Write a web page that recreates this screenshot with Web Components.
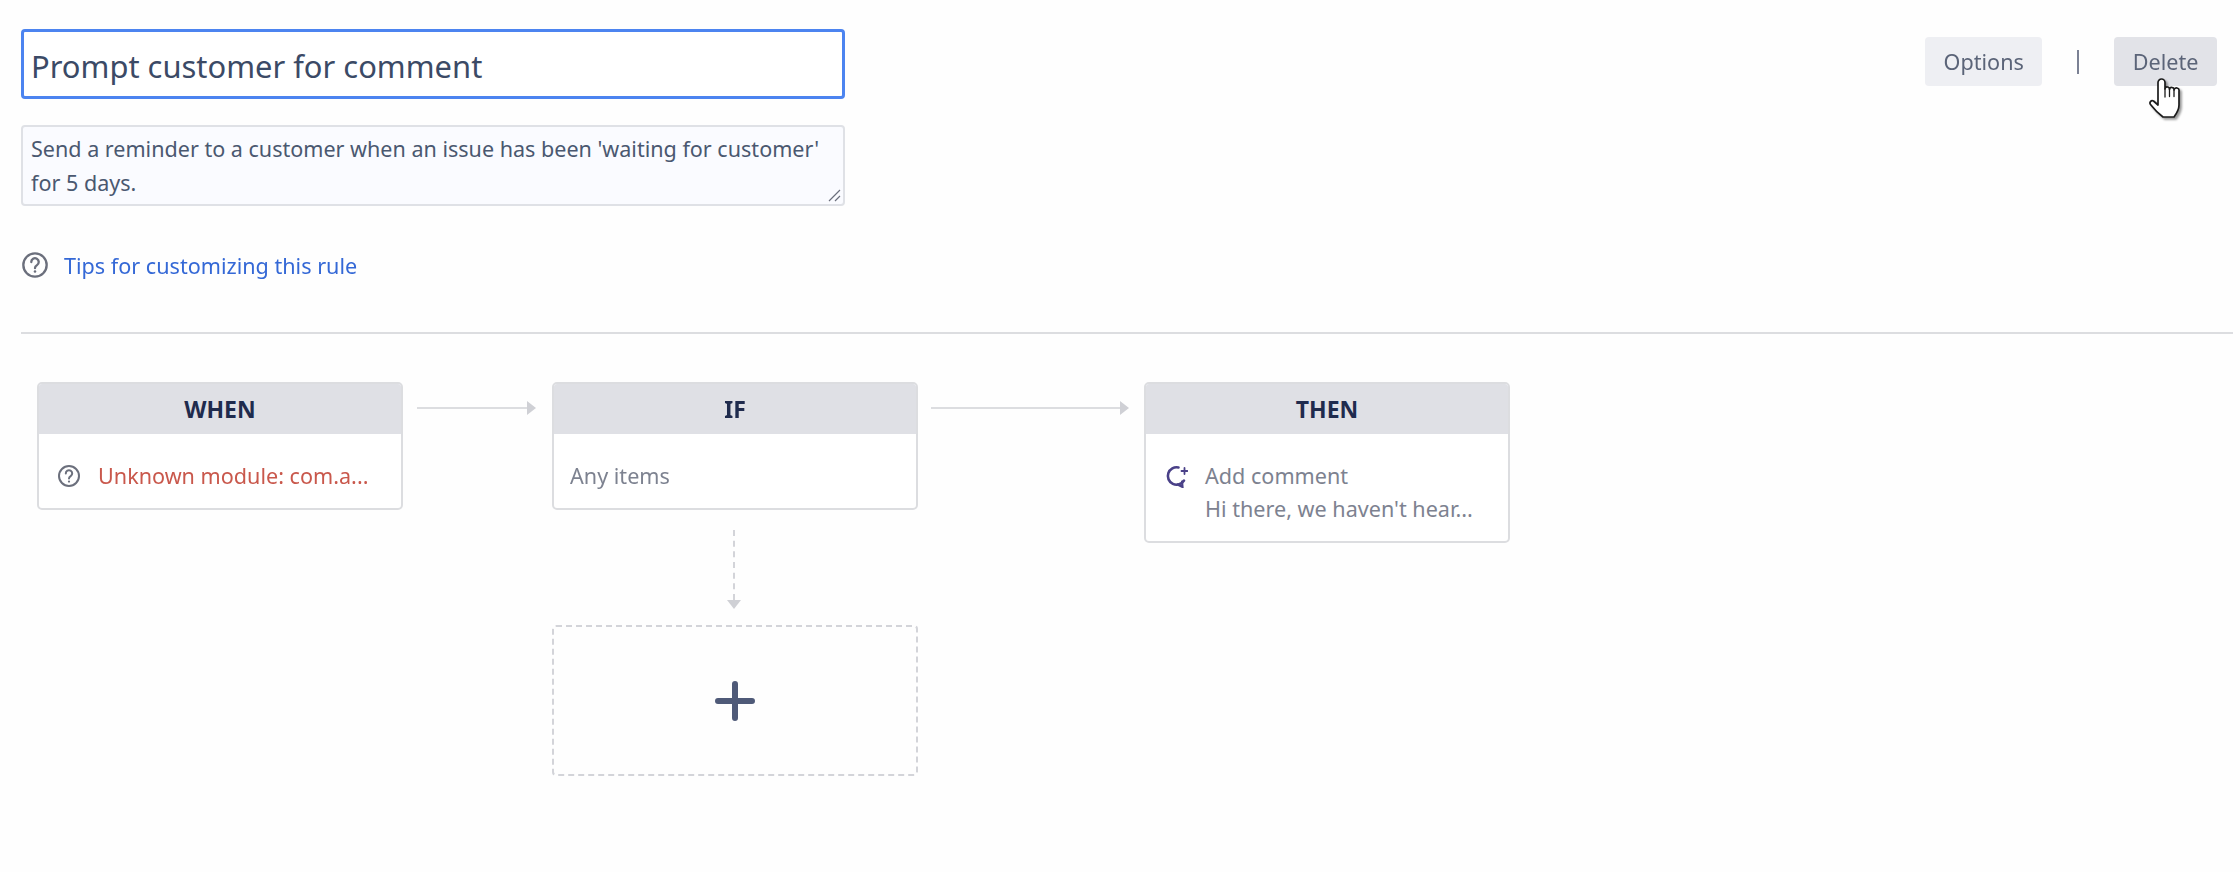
<!DOCTYPE html>
<html lang="en">
<head>
<meta charset="utf-8">
<title>Prompt customer for comment</title>
<style>
  html, body { margin: 0; background: #fefefe; }
  body { font-family: "Noto Sans", "Open Sans", sans-serif; color: #42526e; }
</style>
</head>
<body>

<rule-page>
  <rule-header>
    <title-field>Prompt customer for comment</title-field>
    <desc-field>Send a reminder to a customer when an issue has been 'waiting for customer' for 5 days.</desc-field>
    <tips-link>Tips for customizing this rule</tips-link>
    <action-button slot="actions">Options</action-button>
    <action-sep slot="actions"></action-sep>
    <action-button slot="actions" hovered>Delete</action-button>
  </rule-header>
  <rule-flow>
    <rule-card slot="when" heading="WHEN" icon="help">
      <span style="color:#c9584c">Unknown module: com.a...</span>
    </rule-card>
    <rule-card slot="if" heading="IF">
      <span>Any items</span>
    </rule-card>
    <rule-card slot="then" heading="THEN" icon="comment">
      <span>Add comment</span>
      <span>Hi there, we haven't hear...</span>
    </rule-card>
  </rule-flow>
</rule-page>

<script>
  // Icono de ayuda, se usa en el enlace y en la tarjeta WHEN
  const helpIcon = (size) => `
    <svg width="${size}" height="${size}" viewBox="0 0 24 24" fill="none" stroke="#6b6f7c" stroke-width="2" stroke-linecap="round">
      <circle cx="12" cy="12" r="10"/>
      <path d="M8.8 9.4a3.2 3.2 0 1 1 4.9 2.7c-1 .7-1.7 1.2-1.7 2.500"/>
      <circle cx="12" cy="17.600" r="1.100" fill="#6b6f7c" stroke="none"/>
    </svg>`;

  const commentIcon = `
    <svg width="24" height="24" viewBox="0 0 24 24" fill="none" stroke="#4a4188" stroke-width="2.600" stroke-linecap="round">
      <path d="M14.500 3.500A8.700 8.700 0 1 0 20 16.500"/>
      <path d="M13.500 20.500l5 2.500-.5-5.500" stroke-width="2.200"/>
      <path d="M20.500 4v6M17.500 7h6" stroke-width="1.800"/>
    </svg>`;

  class RulePage extends HTMLElement {
    constructor() {
      super();
      this.attachShadow({ mode: 'open' });
      this.shadowRoot.innerHTML = `
        <style>
          :host { display: block; height: 872px; box-sizing: border-box; padding: 29px 7px 0 21px; overflow: hidden; filter: blur(.4px); }
        </style>
        <slot></slot>
      `;
    }
  }

  class RuleHeader extends HTMLElement {
    constructor() {
      super();
      this.attachShadow({ mode: 'open' });
      this.shadowRoot.innerHTML = `
        <style>
          :host { display: block; }
          .top { display: flex; justify-content: space-between; align-items: flex-start; height: 303px; border-bottom: 2px solid #dcdde0; }
          .left { width: 824px; display: flex; flex-direction: column; }
          .actions { display: flex; align-items: center; padding: 8px 16px 0 0; position: relative; }
          .hand { position: absolute; right: 53px; top: 49px; filter: drop-shadow(2px 2px 1px rgba(0,0,0,.4)); }
        </style>
        <div class="top">
          <div class="left"><slot></slot></div>
          <div class="actions">
            <slot name="actions"></slot>
            <svg class="hand" width="32" height="41" viewBox="0 0 32 41" fill="#fff" stroke="#1c1c1c" stroke-width="1.700" stroke-linejoin="round" stroke-linecap="round">
              <path d="M10 27V4.500a3.500 3.500 0 0 1 7 0V11a2.200 2.200 0 0 1 4.500.5 2.200 2.200 0 0 1 4.500.5 2.500 2.500 0 0 1 5 1V27c0 5-2 8-5 12H15C11 36 6 31 2.500 26.500c-1.500-2 .5-4.500 3-3.500z"/>
              <path d="M17 11v8M21.500 11.500v7M26 12v6.500" fill="none" stroke-width="1.300"/>
            </svg>
          </div>
        </div>
      `;
    }
  }

  class TitleField extends HTMLElement {
    constructor() {
      super();
      this.attachShadow({ mode: 'open' });
      this.shadowRoot.innerHTML = `
        <style>
          :host { display: flex; align-items: center; box-sizing: border-box; height: 70px; padding: 4px 7px 0; border: 3px solid #4c84f0; border-radius: 4px; background: #fff; font-size: 30.900px; color: #3b4a66; }
        </style>
        <slot></slot>
      `;
    }
  }

  class DescField extends HTMLElement {
    constructor() {
      super();
      this.attachShadow({ mode: 'open' });
      this.shadowRoot.innerHTML = `
        <style>
          :host { display: block; position: relative; box-sizing: border-box; height: 81px; margin-top: 26px; padding: 5px 8px; border: 2px solid #dfe1e6; border-radius: 4px; background: #fafbff; font-size: 21.550px; line-height: 34px; color: #4a5870; }
          svg { position: absolute; right: 2px; bottom: 2px; }
        </style>
        <slot></slot>
        <svg width="14" height="14" viewBox="0 0 14 14" stroke="#6b6f7c" stroke-width="1.200" fill="none">
          <path d="M2 13 13 2M8 13l5-5"/>
        </svg>
      `;
    }
  }

  class TipsLink extends HTMLElement {
    constructor() {
      super();
      this.attachShadow({ mode: 'open' });
      this.shadowRoot.innerHTML = `
        <style>
          :host { display: flex; align-items: center; gap: 15px; margin-top: 45px; font-size: 21.600px; line-height: 27px; color: #3468d6; }
        </style>
        ${helpIcon(28)}
        <slot></slot>
      `;
    }
  }

  class ActionButton extends HTMLElement {
    constructor() {
      super();
      this.attachShadow({ mode: 'open' });
      this.shadowRoot.innerHTML = `
        <style>
          :host { display: flex; align-items: center; justify-content: center; height: 49px; padding: 0 18.500px; border-radius: 4px; background: #eeeff3; font-size: 21.600px; color: #5b6478; }
          :host([hovered]) { background: #e2e3e8; }
        </style>
        <slot></slot>
      `;
    }
  }

  class ActionSep extends HTMLElement {
    constructor() {
      super();
      this.attachShadow({ mode: 'open' });
      this.shadowRoot.innerHTML = `
        <style>
          :host { display: block; width: 2px; height: 24px; margin: 0 35px; background: #7b8194; }
        </style>
      `;
    }
  }

  class FlowArrow extends HTMLElement {
    constructor() {
      super();
      this.attachShadow({ mode: 'open' });
      this.shadowRoot.innerHTML = `
        <style>
          :host { display: flex; align-items: center; align-self: flex-start; height: 52px; }
          .line { flex: 1; height: 2px; background: #dcdde0; margin-right: -1px; }
          .head { width: 0; height: 0; border-left: 9px solid #cfd0d5; border-top: 7px solid transparent; border-bottom: 7px solid transparent; }
        </style>
        <div class="line"></div><div class="head"></div>
      `;
    }
  }

  class RuleCard extends HTMLElement {
    constructor() {
      super();
      this.attachShadow({ mode: 'open' });
    }

    connectedCallback() {
      const icon = this.getAttribute('icon');
      let icono = '';
      if (icon === 'help') icono = helpIcon(24);
      if (icon === 'comment') icono = commentIcon;
      this.shadowRoot.innerHTML = `
        <style>
          :host { display: block; box-sizing: border-box; width: 366px; border: 2px solid #dcdde0; border-radius: 5px; background: #fff; overflow: hidden; }
          .head { height: 50px; background: #dfe0e5; display: flex; align-items: center; justify-content: center; font-size: 23px; font-weight: 700; color: #1f2b4d; }
          .body { display: flex; gap: 17px; padding: 25px 16px 16px; font-size: 21.600px; line-height: 33px; color: #7d8290; }
          .body svg { flex: none; margin-top: 5px; margin-left: 2px; }
          .text { display: flex; flex-direction: column; white-space: nowrap; }
          ::slotted(span) { display: block; }
        </style>
        <div class="head">${this.getAttribute('heading')}</div>
        <div class="body">${icono}<div class="text"><slot></slot></div></div>
      `;
    }
  }

  class AddBox extends HTMLElement {
    constructor() {
      super();
      this.attachShadow({ mode: 'open' });
      this.shadowRoot.innerHTML = `
        <style>
          :host { display: flex; align-items: center; justify-content: center; box-sizing: border-box; width: 366px; height: 151px; border: 2px dashed #d3d4d9; border-radius: 4px; }
        </style>
        <svg width="40" height="40" viewBox="0 0 40 40" stroke="#4f5a78" stroke-width="6" stroke-linecap="round">
          <path d="M20 3v34M3 20h34"/>
        </svg>
      `;
    }
  }

  class RuleFlow extends HTMLElement {
    constructor() {
      super();
      this.attachShadow({ mode: 'open' });
      this.shadowRoot.innerHTML = `
        <style>
          :host { display: block; padding: 48px 0 0 16px; }
          .row { display: flex; align-items: flex-start; }
          .col { display: flex; flex-direction: column; align-items: center; }
          .a1 { width: 119px; margin: 0 16px 0 14px; }
          .a2 { width: 198px; margin: 0 15px 0 13px; }
          .down { display: flex; flex-direction: column; align-items: center; height: 115px; padding-top: 20px; box-sizing: border-box; margin-left: -2px; }
          .dash { flex: 1; border-left: 2px dashed #d3d4d9; }
          .tip { width: 0; height: 0; border-top: 9px solid #cfd0d5; border-left: 7px solid transparent; border-right: 7px solid transparent; margin-bottom: 16px; }
        </style>
        <div class="row">
          <slot name="when"></slot>
          <flow-arrow class="a1"></flow-arrow>
          <div class="col">
            <slot name="if"></slot>
            <div class="down"><div class="dash"></div><div class="tip"></div></div>
            <add-box></add-box>
          </div>
          <flow-arrow class="a2"></flow-arrow>
          <slot name="then"></slot>
        </div>
      `;
    }
  }

  customElements.define('rule-page', RulePage);
  customElements.define('rule-header', RuleHeader);
  customElements.define('title-field', TitleField);
  customElements.define('desc-field', DescField);
  customElements.define('tips-link', TipsLink);
  customElements.define('action-button', ActionButton);
  customElements.define('action-sep', ActionSep);
  customElements.define('flow-arrow', FlowArrow);
  customElements.define('rule-card', RuleCard);
  customElements.define('add-box', AddBox);
  customElements.define('rule-flow', RuleFlow);
</script>
</body>
</html>
